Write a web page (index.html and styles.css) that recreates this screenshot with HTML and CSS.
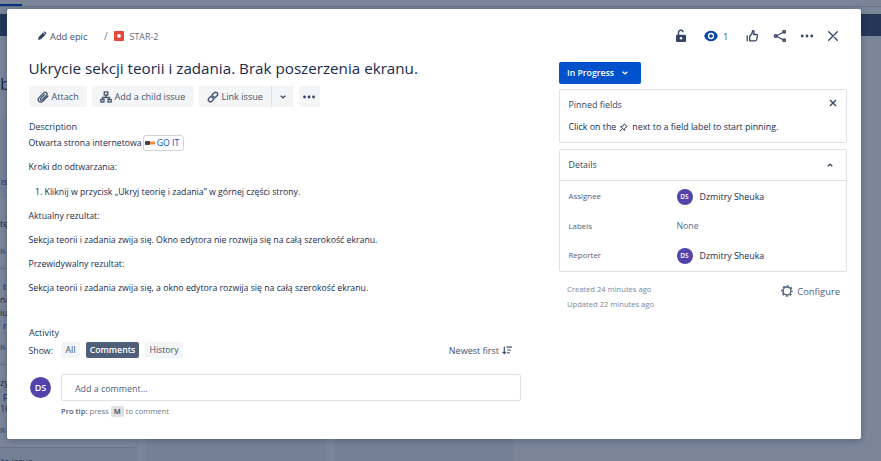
FILE: index.html
```
<!DOCTYPE html>
<html lang="pl">
<head>
<meta charset="utf-8">
<title>STAR-2</title>
<link rel="stylesheet" href="styles.css">
</head>
<body>
<div class="board">
  <div class="board-tabs"><span class="tab-active"></span></div>
  <div class="board-gap"></div>
  <div class="board-nav"></div>
  <div class="board-title">b</div>
  <div class="columns">
    <div class="column first">
      <div class="column-head">IS</div>
      <div class="card c1"><p>tę</p><small>R-</small></div>
      <div class="card c2"><p class="in">t</p><p>no</p><p>iu</p><p class="in">r</p><small>R-</small></div>
      <div class="card c3"><p>zy</p><p class="in">p</p><p>16</p><small>R-</small></div>
      <div class="create">te issue</div>
    </div>
    <div class="column"></div>
    <div class="column"></div>
  </div>
</div>

<main class="modal">
  <header class="topbar">
    <div class="crumbs">
      <svg class="pencil" width="10" height="10" viewBox="0 0 10 10"><path d="M1 9l.7-2.900L6 1.500l2.400 2.400L3.900 8.300zM6.500 1.100l.5-.5q.4-.3.800 0L9.300 2.100q.3.400 0 .800l-.5.500z" fill="#344563"/></svg>
      <span class="epic">Add epic</span>
      <span class="slash">/</span>
      <svg class="bug" width="10" height="10" viewBox="0 0 10 10"><rect width="10" height="10" rx="1" fill="#e5493a"/><circle cx="5" cy="4.800" r="1.900" fill="#fff"/></svg>
      <span class="key">STAR-2</span>
    </div>
    <div class="tools">
      <svg class="lock" width="12" height="14" viewBox="0 0 12 14"><path d="M3.500 6V3.700a2.300 2.300 0 0 1 4.600-.4" fill="none" stroke="#344563" stroke-width="1.400"/><rect x="1" y="5.700" width="10" height="7.300" rx="1.200" fill="#344563"/><circle cx="6" cy="9.300" r="1.200" fill="#fff"/></svg>
      <svg class="eye" width="14" height="12" viewBox="0 0 14 12"><path d="M.1 6C1.500 2.200 4 .700 7 .700S12.500 2.200 13.900 6C12.500 9.800 10 11.300 7 11.300S1.500 9.800.1 6z" fill="#0747a6"/><circle cx="7" cy="6" r="2.500" fill="none" stroke="#fff" stroke-width="1.300"/></svg>
      <span class="watchers">1</span>
      <svg class="thumb" width="14" height="14" viewBox="0 0 14 14" fill="none" stroke="#344563" stroke-width="1.300" stroke-linejoin="round"><path d="M2.200 6.800v5M4.700 11.800V7.300L7 4.500l.5-2.500c.2-.8 1.600-.4 1.600.8L8.700 5.500h2.500c1 0 1.300.7 1.200 1.300l-.9 4.100c-.2.600-.5.900-1.200.900H4.700z" stroke-linecap="round"/></svg>
      <svg class="share" width="14" height="14" viewBox="0 0 14 14" fill="#8993a4" stroke="#344563" stroke-width="1.200"><path d="M3 7l8-4M3 7l8 4.200" fill="none"/><circle cx="2.600" cy="7" r="1.400"/><circle cx="11.200" cy="2.800" r="1.400"/><circle cx="11.200" cy="11.200" r="1.400"/></svg>
      <svg class="more" width="14" height="4" viewBox="0 0 14 4" fill="#344563"><circle cx="2.200" cy="2" r="1.400"/><circle cx="7" cy="2" r="1.400"/><circle cx="11.800" cy="2" r="1.400"/></svg>
      <svg class="close" width="10" height="10" viewBox="0 0 10 10"><path d="M.7.700l8.600 8.600M9.300.700L.7 9.300" stroke="#344563" stroke-width="1.300" fill="none" stroke-linecap="round"/></svg>
    </div>
  </header>

  <div class="body">
    <section class="content">
      <h1>Ukrycie sekcji teorii i zadania. Brak poszerzenia ekranu.</h1>
      <div class="actions">
        <button class="btn attach"><svg width="12" height="12" viewBox="0 0 12 12"><path d="M10.800 5.200L6 10c-3 2.600-6.300-.8-4-3.400L6.700 1.900c2.200-1.900 4.600.5 2.700 2.600L5.200 8.700c-1.400 1.100-2.500-.2-1.500-1.400l3.600-3.600" fill="none" stroke="#42526e" stroke-width="1.300" stroke-linecap="round"/></svg><span>Attach</span></button>
        <button class="btn child"><svg width="12" height="12" viewBox="0 0 12 12" fill="none" stroke="#42526e" stroke-width="1.300"><rect x="4.200" y="1" width="3.600" height="3"/><path d="M6 4v2.500M2.500 8.500v-2h7v2"/><rect x=".8" y="8.500" width="3.200" height="2.500"/><rect x="8" y="8.500" width="3.200" height="2.500"/></svg><span>Add a child issue</span></button>
        <div class="split">
          <button class="btn link"><svg width="12" height="12" viewBox="0 0 12 12" fill="none" stroke="#42526e" stroke-width="1.400" stroke-linecap="round"><path d="M5.200 3.800l2-2c2-1.700 4.600.7 3 2.800L8.300 6.500c-1.100 1-2.600.7-3.200-.4"/><path d="M6.800 8.200l-2 2c-2 1.700-4.600-.7-3-2.800l1.900-1.900c1.100-1 2.600-.7 3.200.4"/></svg><span>Link issue</span></button>
          <button class="btn drop"><svg width="6" height="4" viewBox="0 0 6 4"><path d="M.8.800L3 2.900 5.200.800" fill="none" stroke="#344563" stroke-width="1.400"/></svg></button>
        </div>
        <button class="btn dots"><svg width="14" height="4" viewBox="0 0 14 4" fill="#344563"><circle cx="2.500" cy="2" r="1.400"/><circle cx="7" cy="2" r="1.400"/><circle cx="11.500" cy="2" r="1.400"/></svg></button>
      </div>
      <h2 class="desc-title"><span>Description</span></h2>
      <div class="desc">
        <p class="intro"><span>Otwarta strona internetowa</span><a class="smart"><svg width="10" height="4" viewBox="0 0 10 4"><rect width="5" height="4" rx="1" fill="#42424a"/><rect x="5" y=".5" width="5" height="3" fill="#f58a3c"/></svg><span>GO IT</span></a></p>
        <p>Kroki do odtwarzania:</p>
        <p class="step">1. Kliknij w przycisk „Ukryj teorię i zadania” w górnej części strony.</p>
        <p>Aktualny rezultat:</p>
        <p>Sekcja teorii i zadania zwija się. Okno edytora nie rozwija się na całą szerokość ekranu.</p>
        <p>Przewidywalny rezultat:</p>
        <p>Sekcja teorii i zadania zwija się, a okno edytora rozwija się na całą szerokość ekranu.</p>
      </div>
      <h2 class="activity-title"><span>Activity</span></h2>
      <div class="filters">
        <span class="show">Show:</span>
        <span class="chip all">All</span><span class="chip comments">Comments</span><span class="chip history">History</span>
        <span class="sort"><span>Newest first</span><svg width="10" height="9" viewBox="0 0 10 9" fill="none" stroke="#42526e" stroke-width="1.200"><path d="M2.300.500v7M.5 5.800l1.800 1.900 1.800-1.900M4.500 1.100H10M5.200 4H9M5.200 6.900h2.600"/></svg></span>
      </div>
      <div class="comment-row">
        <span class="avatar big">DS</span>
        <div class="comment-box"><span>Add a comment...</span></div>
      </div>
      <div class="tip"><b>Pro tip:</b><span class="press">press</span><kbd>M</kbd><span class="to">to comment</span></div>
    </section>

    <aside class="side">
      <button class="status"><span>In Progress</span><svg width="6" height="4" viewBox="0 0 6 4"><path d="M.6.700L3 2.900 5.400.700" fill="none" stroke="#fff" stroke-width="1.400"/></svg></button>
      <section class="panel pinned">
        <div class="pin-head"><span>Pinned fields</span><svg width="8" height="8" viewBox="0 0 8 8"><path d="M1 1l6 6M7 1L1 7" stroke="#344563" stroke-width="1.400"/></svg></div>
        <p><span>Click on the</span><svg width="9" height="9" viewBox="0 0 9 9" fill="none" stroke="#253858" stroke-width="1" stroke-linejoin="round"><path d="M5.300.800l2.900 2.900-1 .3-1.500 1.600-.1 1.800L1.600 3.400l1.800-.1L5 1.800zM3.400 5.600L.7 8.300"/></svg><span>next to a field label to start pinning.</span></p>
      </section>
      <section class="panel details">
        <div class="details-head"><span>Details</span><svg width="6" height="4" viewBox="0 0 6 4"><path d="M.7 3.300L3 1.100l2.300 2.200" fill="none" stroke="#344563" stroke-width="1.400"/></svg></div>
        <div class="field"><span class="label">Assignee</span><span class="avatar">DS</span><span class="name">Dzmitry Sheuka</span></div>
        <div class="field"><span class="label">Labels</span><span class="none">None</span></div>
        <div class="field"><span class="label">Reporter</span><span class="avatar">DS</span><span class="name">Dzmitry Sheuka</span></div>
      </section>
      <div class="meta">
        <div class="dates"><div>Created 24 minutes ago</div><div>Updated 22 minutes ago</div></div>
        <div class="configure"><svg width="12" height="12" viewBox="0 0 12 12" fill="none" stroke="#505f79"><circle cx="6" cy="6" r="4" stroke-width="1.500"/><circle cx="6" cy="6" r="5.200" stroke-width="1.300" stroke-dasharray="2.100 1.984" stroke-dashoffset="1.050"/></svg><span>Configure</span></div>
      </div>
    </aside>
  </div>
</main>
</body>
</html>
```
FILE: styles.css
```
* { box-sizing: border-box; }
body { margin: 0; width: 881px; height: 461px; overflow: hidden; position: relative; background: #7a8599; font-family: "Open Sans", "Noto Sans", sans-serif; color: #172b4d; font-size: 8.720px; }
h1, h2, p { margin: 0; font-weight: 400; }
button { border: 0; padding: 0; font: inherit; color: inherit; }
svg { display: block; flex: none; }
span { white-space: nowrap; }

.board { height: 461px; color: #1c2b4c; display: flex; flex-direction: column; }
.board-tabs { height: 7px; border-bottom: 1px solid #69758b; display: flex; align-items: flex-end; flex: none; }
.tab-active { width: 22px; height: 2px; background: #0a3278; }
.board-gap { height: 7px; flex: none; }
.board-nav { height: 22px; background: #243757; flex: none; }
.board-title { height: 83px; padding-top: 36px; font-size: 17px; line-height: 24px; flex: none; }
.columns { display: flex; gap: 8px; flex: 1; }
.column { width: 180px; background: #748096; }
.column.first { width: 138px; padding-right: 3px; }
.column-head { height: 79px; padding: 56px 0 0 1px; font-size: 8px; line-height: 14px; }
.card { border-bottom: 1px solid #667288; position: relative; background: #7a8599; font-size: 9.200px; line-height: 13px; }
.card p { white-space: nowrap; }
.card p.in { padding-left: 3px; }
.card small { font-size: 8px; line-height: 12px; color: #344563; position: absolute; left: 0; bottom: 11px; }
.c1 { height: 71px; padding-top: 19px; }
.c2 { height: 96px; padding-top: 11px; }
.c3 { height: 83px; padding-top: 11px; }
.create { padding: 7px 0 0 1px; line-height: 14px; font-size: 9px; }

.modal { position: absolute; left: 7px; top: 9px; width: 854px; height: 430px; background: #fff; border-radius: 2px; box-shadow: 0 1px 6px rgba(9, 30, 66, .35); padding: 0 14px 0 21.500px; }
.topbar { height: 54px; display: flex; justify-content: space-between; align-items: center; }
.crumbs, .tools { display: flex; align-items: center; color: #42526e; }
.pencil { margin: 0 3px 0 8.500px; }
.epic { font-size: 9.300px; }
.slash { margin-left: 16.500px; color: #6b778c; font-size: 10px; }
.bug { margin-left: 6.500px; }
.key { margin-left: 5.500px; color: #5e6c84; font-size: 8.900px; padding-top: 1px; }
.tools { padding-right: 9px; }
.eye { margin-left: 17px; }
.watchers { margin-left: 5px; color: #42526e; width: 5px; font-size: 9.300px; }
.thumb { margin-left: 17px; }
.share { margin-left: 14px; }
.more { margin-left: 13px; }
.close { margin-left: 14px; }

.body { display: flex; justify-content: space-between; }
.content { width: 492.500px; }
h1 { font-size: 15.200px; line-height: 20px; margin-top: -5px; height: 28px; white-space: nowrap; }
.actions { display: flex; gap: 5px; height: 21px; }
.btn { background: #f4f5f7; border-radius: 2px; color: #42526e; display: flex; align-items: center; height: 21px; padding-left: 8px; gap: 3px; font-size: 9.100px; }
.attach { width: 58px; }
.child { width: 102px; }
.split { display: flex; gap: 1px; background: #dfe1e6; border-radius: 2px; }
.link { width: 72px; border-radius: 2px 0 0 2px; }
.drop { width: 21px; border-radius: 0 2px 2px 0; }
.dots { width: 21px; padding-left: 3px; margin-left: 1px; }
h2 { font-size: 9px; color: #253858; padding-left: .5px; }
.desc-title { margin-top: 11px; height: 17px; line-height: 17px; }
.desc p { height: 24px; line-height: 14px; white-space: nowrap; }
.desc .intro { display: flex; align-items: center; height: 16px; margin-bottom: 9px; }
.smart { display: flex; align-items: center; gap: 2px; margin-left: 1px; width: 41px; height: 16px; border: 1px solid #cfd4dd; border-radius: 3px; padding-left: 1px; color: #0052cc; }
.desc .step { padding-left: 6.500px; margin-top: 1px; }
.activity-title { margin-top: 20px; height: 15px; line-height: 15px; }
.filters { display: flex; align-items: center; height: 16px; margin-top: 2px; }
.show { width: 32.500px; color: #253858; padding-top: 1px; }
.chip { height: 16px; line-height: 17px; background: #f4f5f7; border-radius: 2px; color: #42526e; font-weight: 500; text-align: center; }
.all { width: 19px; }
.comments { width: 53px; margin: 0 6px; background: #505f79; color: #fff; font-weight: 600; }
.history { width: 38px; }
.sort { margin-left: auto; margin-right: 9px; display: flex; align-items: center; gap: 3px; color: #42526e; font-size: 9px; }
.comment-row { display: flex; align-items: center; height: 27px; margin-top: 16px; padding-left: 1.500px; }
.avatar { width: 16px; height: 16px; border-radius: 50%; background: #5243aa; color: #fff; font-size: 6.500px; font-weight: 600; line-height: 16px; text-align: center; flex: none; }
.avatar.big { width: 21px; height: 21px; line-height: 21px; font-size: 9px; }
.comment-box { margin-left: 10px; width: 460px; height: 27px; border: 1px solid #dfe1e6; border-radius: 2px; padding: 1px 0 0 13px; line-height: 25px; color: #505f79; font-size: 8.900px; }
.tip { display: flex; align-items: center; margin: 4px 0 0 32.500px; height: 12px; color: #6b778c; font-size: 7.600px; }
.tip b { color: #505f79; font-weight: 600; margin-right: 2px; }
kbd { font: 600 7.500px/11px "Open Sans", sans-serif; width: 13px; height: 11px; text-align: center; background: #dfe1e6; border-radius: 2px; color: #344563; margin: 0 2px; }

.side { width: 288px; margin-top: -1px; }
.status { width: 82px; height: 22px; background: #0052cc; color: #fff; border-radius: 2px; font-weight: 600; display: flex; align-items: center; gap: 8px; padding-left: 8px; }
.panel { border: 1px solid #dfe1e6; border-radius: 2px; }
.pinned { margin-top: 5px; height: 54px; padding: 7px 9px 0 8.500px; }
.pin-head { display: flex; justify-content: space-between; height: 15px; margin-bottom: 1px; align-items: center; color: #344563; font-size: 8.900px; }
.pin-head svg { margin-bottom: 3px; }
.pinned p { display: flex; align-items: center; height: 16px; margin-top: 7px; font-size: 8.850px; }
.pinned p svg { margin: 0 4px 0 3px; }
.details { margin-top: 6px; height: 123px; }
.details-head { height: 31px; border-bottom: 1px solid #dfe1e6; display: flex; align-items: center; justify-content: space-between; padding: 0 13px 1px 8.500px; color: #344563; font-size: 8.900px; }
.field { display: flex; align-items: center; height: 29.500px; padding-left: 8.500px; position: relative; top: 1px; }
.label { width: 108px; color: #505f79; font-size: 7.900px; font-weight: 500; padding-bottom: 1px; }
.name { margin-left: 7px; font-size: 8.850px; }
.none { color: #5e6c84; }
.meta { display: flex; justify-content: space-between; padding: 10px 7px 0 8px; }
.dates { font-size: 7.600px; line-height: 15px; color: #7a869a; }
.configure { display: flex; align-items: center; gap: 4px; height: 18px; color: #505f79; font-size: 9.400px; }
```
